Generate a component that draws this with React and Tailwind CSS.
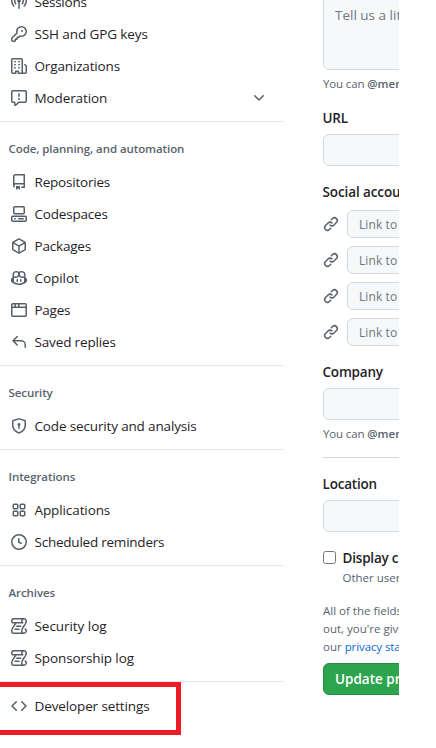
const ICONS = {
  broadcast: 'M8.75 8.582v5.668a.75.75 0 0 1-1.5 0V8.582a1.75 1.75 0 1 1 1.5 0Zm3.983-7.125a.75.75 0 0 1 1.06.026A7.976 7.976 0 0 1 16 7c0 2.139-.84 4.083-2.207 5.517a.75.75 0 1 1-1.086-1.034A6.474 6.474 0 0 0 14.5 7a6.474 6.474 0 0 0-1.793-4.483.75.75 0 0 1 .026-1.06Zm-9.466 0c.3.286.312.76.026 1.06A6.474 6.474 0 0 0 1.5 7a6.47 6.47 0 0 0 1.793 4.483.75.75 0 0 1-1.086 1.034A7.973 7.973 0 0 1 0 7c0-2.139.84-4.083 2.207-5.517a.75.75 0 0 1 1.06-.026Zm8.556 2.321A4.988 4.988 0 0 1 13 7a4.988 4.988 0 0 1-1.177 3.222.75.75 0 1 1-1.146-.967A3.487 3.487 0 0 0 11.5 7c0-.86-.309-1.645-.823-2.255a.75.75 0 0 1 1.146-.967Zm-6.492.958A3.48 3.48 0 0 0 4.5 7a3.48 3.48 0 0 0 .823 2.255.75.75 0 0 1-1.146.967A4.981 4.981 0 0 1 3 7a4.982 4.982 0 0 1 1.188-3.236.75.75 0 1 1 1.143.972Z',
  key: 'M10.5 0a5.499 5.499 0 1 1-1.288 10.848l-.932.932a.749.749 0 0 1-.53.22H7v.75a.749.749 0 0 1-.22.53l-.5.5a.749.749 0 0 1-.53.22H5v.75a.749.749 0 0 1-.22.53l-.5.5a.749.749 0 0 1-.53.22h-2A1.75 1.75 0 0 1 0 14.25v-2c0-.199.079-.389.22-.53l4.932-4.932A5.5 5.5 0 0 1 10.5 0Zm-4 5.5c-.001.431.069.86.205 1.269a.75.75 0 0 1-.181.768L1.5 12.56v1.69c0 .138.112.25.25.25h1.69l.06-.06v-1.19a.75.75 0 0 1 .75-.75h1.19l.06-.06v-1.19a.75.75 0 0 1 .75-.75h1.19l1.023-1.025a.75.75 0 0 1 .768-.18A4 4 0 1 0 6.5 5.5ZM11 6a1 1 0 1 1 0-2 1 1 0 0 1 0 2Z',
  organization: 'M1.75 16A1.75 1.75 0 0 1 0 14.25V1.75C0 .784.784 0 1.75 0h8.5C11.216 0 12 .784 12 1.75v12.5c0 .085-.006.168-.018.25h2.268a.25.25 0 0 0 .25-.25V8.285a.25.25 0 0 0-.111-.208l-1.055-.703a.749.749 0 1 1 .832-1.248l1.055.703c.487.325.779.871.779 1.456v5.965A1.75 1.75 0 0 1 14.25 16h-3.5a.766.766 0 0 1-.197-.026c-.099.017-.2.026-.303.026h-3a.75.75 0 0 1-.75-.75V14h-1v1.25a.75.75 0 0 1-.75.75Zm-.25-1.75c0 .138.112.25.25.25H4v-1.25a.75.75 0 0 1 .75-.75h2.5a.75.75 0 0 1 .75.75v1.25h2.25a.25.25 0 0 0 .25-.25V1.75a.25.25 0 0 0-.25-.25h-8.5a.25.25 0 0 0-.25.25ZM3.75 6h.5a.75.75 0 0 1 0 1.5h-.5a.75.75 0 0 1 0-1.5ZM3 3.75A.75.75 0 0 1 3.75 3h.5a.75.75 0 0 1 0 1.5h-.5A.75.75 0 0 1 3 3.75Zm4 3A.75.75 0 0 1 7.75 6h.5a.75.75 0 0 1 0 1.5h-.5A.75.75 0 0 1 7 6.75ZM7.75 3h.5a.75.75 0 0 1 0 1.5h-.5a.75.75 0 0 1 0-1.5ZM3 9.75A.75.75 0 0 1 3.75 9h.5a.75.75 0 0 1 0 1.5h-.5A.75.75 0 0 1 3 9.75ZM7.75 9h.5a.75.75 0 0 1 0 1.5h-.5a.75.75 0 0 1 0-1.5Z',
  report: 'M0 1.75C0 .784.784 0 1.75 0h12.5C15.216 0 16 .784 16 1.75v9.5A1.75 1.75 0 0 1 14.25 13H8.06l-2.573 2.573A1.458 1.458 0 0 1 3 14.543V13H1.75A1.75 1.75 0 0 1 0 11.25Zm1.75-.25a.25.25 0 0 0-.25.25v9.5c0 .138.112.25.25.25h2a.75.75 0 0 1 .75.75v2.19l2.72-2.72a.749.749 0 0 1 .53-.22h6.5a.25.25 0 0 0 .25-.25v-9.5a.25.25 0 0 0-.25-.25Zm7 2.25v2.5a.75.75 0 0 1-1.5 0v-2.5a.75.75 0 0 1 1.5 0ZM9 9a1 1 0 1 1-2 0 1 1 0 0 1 2 0Z',
  chevron: 'M12.78 5.22a.749.749 0 0 1 0 1.06l-4.25 4.25a.749.749 0 0 1-1.06 0L3.22 6.28a.749.749 0 1 1 1.06-1.06L8 8.939l3.72-3.719a.749.749 0 0 1 1.06 0Z',
  repo: 'M2 2.5A2.5 2.5 0 0 1 4.5 0h8.75a.75.75 0 0 1 .75.75v12.5a.75.75 0 0 1-.75.75h-2.5a.75.75 0 0 1 0-1.5h1.75v-2h-8a1 1 0 0 0-.714 1.7.75.75 0 1 1-1.072 1.05A2.495 2.495 0 0 1 2 11.5Zm10.5-1h-8a1 1 0 0 0-1 1v6.708A2.486 2.486 0 0 1 4.5 9h8ZM5 12.25a.25.25 0 0 1 .25-.25h3.5a.25.25 0 0 1 .25.25v3.25a.25.25 0 0 1-.4.2l-1.45-1.087a.249.249 0 0 0-.3 0L5.4 15.7a.25.25 0 0 1-.4-.2Z',
  codespaces: 'M0 11.25c0-.966.784-1.75 1.75-1.75h12.5c.966 0 1.75.784 1.75 1.75v3A1.75 1.75 0 0 1 14.25 16H1.75A1.75 1.75 0 0 1 0 14.25Zm2-9.5C2 .784 2.784 0 3.75 0h8.5C13.216 0 14 .784 14 1.75v5a1.75 1.75 0 0 1-1.75 1.75h-8.5A1.75 1.75 0 0 1 2 6.75Zm1.75-.25a.25.25 0 0 0-.25.25v5c0 .138.112.25.25.25h8.5a.25.25 0 0 0 .25-.25v-5a.25.25 0 0 0-.25-.25Zm-2 9.5a.25.25 0 0 0-.25.25v3c0 .138.112.25.25.25h12.5a.25.25 0 0 0 .25-.25v-3a.25.25 0 0 0-.25-.25ZM7 12.75a.75.75 0 0 1 .75-.75h4.5a.75.75 0 0 1 0 1.5h-4.5a.75.75 0 0 1-.75-.75Zm-4 0a.75.75 0 0 1 .75-.75h.5a.75.75 0 0 1 0 1.5h-.5a.75.75 0 0 1-.75-.75Z',
  package: 'm8.878.392 5.25 3.045c.54.314.872.89.872 1.514v6.098a1.75 1.75 0 0 1-.872 1.514l-5.25 3.045a1.75 1.75 0 0 1-1.756 0l-5.25-3.045A1.75 1.75 0 0 1 1 11.049V4.951c0-.624.332-1.201.872-1.514L7.122.392a1.75 1.75 0 0 1 1.756 0ZM7.875 1.69l-4.63 2.685L8 7.133l4.755-2.758-4.63-2.685a.248.248 0 0 0-.25 0ZM2.5 5.677v5.372c0 .09.047.171.125.216l4.625 2.683V8.432Zm6.25 8.271 4.625-2.683a.25.25 0 0 0 .125-.216V5.677L8.75 8.432Z',
  copilot: 'M7.998 15.035c-4.562 0-7.873-2.914-7.998-3.749V9.338c.085-.628.677-1.686 1.588-2.065.013-.07.024-.143.036-.218.029-.183.06-.384.126-.612-.201-.508-.254-1.084-.254-1.656 0-.87.128-1.769.693-2.484.579-.733 1.494-1.124 2.724-1.261 1.206-.134 2.262.034 2.944.765.05.053.096.108.139.165.044-.057.094-.112.143-.165.682-.731 1.738-.899 2.944-.765 1.23.137 2.145.528 2.724 1.261.566.715.693 1.614.693 2.484 0 .572-.053 1.148-.254 1.656.066.228.098.429.126.612.012.076.024.148.037.218.924.385 1.522 1.471 1.591 2.095v1.872c0 .766-3.351 3.795-8.002 3.795Zm0-1.485c2.28 0 4.584-1.11 5.002-1.433V7.862l-.023-.116c-.49.21-1.075.291-1.727.291-1.146 0-2.059-.327-2.71-.991A3.222 3.222 0 0 1 8 6.303a3.24 3.24 0 0 1-.544.743c-.65.664-1.563.991-2.71.991-.652 0-1.236-.081-1.727-.291l-.023.116v4.255c.419.323 2.722 1.433 5.002 1.433ZM6.762 2.83c-.193-.206-.637-.413-1.682-.297-1.019.113-1.479.404-1.713.7-.247.312-.369.789-.369 1.554 0 .793.129 1.171.308 1.371.162.181.519.379 1.442.379.853 0 1.339-.235 1.638-.54.315-.322.527-.827.617-1.553.117-.935-.037-1.395-.241-1.614Zm4.155-.297c-1.044-.116-1.488.091-1.681.297-.204.219-.359.679-.242 1.614.091.726.303 1.231.618 1.553.299.305.784.54 1.638.54.922 0 1.28-.198 1.442-.379.179-.2.308-.578.308-1.371 0-.765-.123-1.242-.37-1.554-.233-.296-.693-.587-1.713-.7ZM6.25 9.037a.75.75 0 0 1 .75.75v1.501a.75.75 0 0 1-1.5 0V9.787a.75.75 0 0 1 .75-.75Zm4.25.75v1.501a.75.75 0 0 1-1.5 0V9.787a.75.75 0 0 1 1.5 0Z',
  browser: 'M0 2.75C0 1.784.784 1 1.75 1h12.5c.966 0 1.75.784 1.75 1.75v10.5A1.75 1.75 0 0 1 14.25 15H1.75A1.75 1.75 0 0 1 0 13.25ZM14.5 6h-13v7.25c0 .138.112.25.25.25h12.5a.25.25 0 0 0 .25-.25Zm-6-3.5v2h6V2.75a.25.25 0 0 0-.25-.25ZM5 2.5v2h2v-2Zm-3.25 0a.25.25 0 0 0-.25.25V4.5h2v-2Z',
  reply: 'M6.78 1.97a.75.75 0 0 1 0 1.06L3.81 6h6.44A4.75 4.75 0 0 1 15 10.75v2.5a.75.75 0 0 1-1.5 0v-2.5a3.25 3.25 0 0 0-3.25-3.25H3.81l2.97 2.97a.749.749 0 0 1-.326 1.275.749.749 0 0 1-.734-.215L1.47 7.28a.75.75 0 0 1 0-1.06l4.25-4.25a.75.75 0 0 1 1.06 0Z',
  shield: 'm8.533.133 5.25 1.68A1.75 1.75 0 0 1 15 3.48V7c0 1.566-.32 3.182-1.303 4.682-.983 1.498-2.585 2.813-5.032 3.855a1.697 1.697 0 0 1-1.33 0c-2.447-1.042-4.049-2.357-5.032-3.855C1.32 10.182 1 8.566 1 7V3.48a1.75 1.75 0 0 1 1.217-1.667l5.25-1.68a1.748 1.748 0 0 1 1.066 0Zm-.61 1.429.001.001-5.25 1.68a.251.251 0 0 0-.174.237V7c0 1.36.275 2.666 1.057 3.859.784 1.194 2.121 2.342 4.366 3.298a.196.196 0 0 0 .154 0c2.245-.957 3.582-2.103 4.366-3.297C13.225 9.666 13.5 8.358 13.5 7V3.48a.25.25 0 0 0-.174-.238l-5.25-1.68a.25.25 0 0 0-.153 0ZM9.5 6.5c0 .536-.286 1.032-.75 1.3v2.45a.75.75 0 0 1-1.5 0V7.8A1.5 1.5 0 1 1 9.5 6.5Z',
  apps: 'M1.5 3.25c0-.966.784-1.75 1.75-1.75h2.5c.966 0 1.75.784 1.75 1.75v2.5A1.75 1.75 0 0 1 5.75 7.5h-2.5A1.75 1.75 0 0 1 1.5 5.75Zm7 0c0-.966.784-1.75 1.75-1.75h2.5c.966 0 1.75.784 1.75 1.75v2.5a1.75 1.75 0 0 1-1.75 1.75h-2.5A1.75 1.75 0 0 1 8.5 5.75Zm-7 7c0-.966.784-1.75 1.75-1.75h2.5c.966 0 1.75.784 1.75 1.75v2.5a1.75 1.75 0 0 1-1.75 1.75h-2.5a1.75 1.75 0 0 1-1.75-1.75Zm7 0c0-.966.784-1.75 1.75-1.75h2.5c.966 0 1.75.784 1.75 1.75v2.5a1.75 1.75 0 0 1-1.75 1.75h-2.5a1.75 1.75 0 0 1-1.75-1.75ZM3.25 3a.25.25 0 0 0-.25.25v2.5c0 .138.112.25.25.25h2.5A.25.25 0 0 0 6 5.75v-2.5A.25.25 0 0 0 5.75 3Zm7 0a.25.25 0 0 0-.25.25v2.5c0 .138.112.25.25.25h2.5a.25.25 0 0 0 .25-.25v-2.5a.25.25 0 0 0-.25-.25Zm-7 7a.25.25 0 0 0-.25.25v2.5c0 .138.112.25.25.25h2.5a.25.25 0 0 0 .25-.25v-2.5a.25.25 0 0 0-.25-.25Zm7 0a.25.25 0 0 0-.25.25v2.5c0 .138.112.25.25.25h2.5a.25.25 0 0 0 .25-.25v-2.5a.25.25 0 0 0-.25-.25Z',
  clock: 'M8 0a8 8 0 1 1 0 16A8 8 0 0 1 8 0ZM1.5 8a6.5 6.5 0 1 0 13 0 6.5 6.5 0 0 0-13 0Zm7-3.25v2.992l2.028.812a.75.75 0 0 1-.557 1.392l-2.5-1A.751.751 0 0 1 7 8.25v-3.5a.75.75 0 0 1 1.5 0Z',
  log: 'M5 8.25a.75.75 0 0 1 .75-.75h4a.75.75 0 0 1 0 1.5h-4A.75.75 0 0 1 5 8.25ZM4 10.5A.75.75 0 0 0 4 12h4a.75.75 0 0 0 0-1.5H4ZM13-.005c1.654 0 3 1.328 3 3 0 .982-.338 1.933-.783 2.818-.443.879-1.028 1.758-1.582 2.588l-.011.017c-.568.853-1.104 1.659-1.501 2.446-.398.789-.623 1.494-.623 2.136a1.5 1.5 0 1 0 2.333-1.248.75.75 0 0 1 .834-1.246A3 3 0 0 1 13 16H3a3 3 0 0 1-3-3c0-1.582.891-3.135 1.777-4.506.209-.322.418-.637.623-.946.473-.709.923-1.386 1.287-2.048H2.51c-.576 0-1.381-.133-1.907-.783A2.68 2.68 0 0 1 0 2.995a3 3 0 0 1 3-3Zm0 1.5a1.5 1.5 0 0 0-1.5 1.5c0 .476.223.834.667 1.132A.75.75 0 0 1 11.75 5.5H5.368c-.467 1.003-1.141 2.015-1.773 2.963-.192.289-.381.571-.558.845C2.13 10.711 1.5 11.916 1.5 13A1.5 1.5 0 0 0 3 14.5h7.401A2.989 2.989 0 0 1 10 13c0-.979.338-1.928.784-2.812.441-.874 1.023-1.748 1.575-2.576l.017-.026c.568-.853 1.103-1.658 1.501-2.448.398-.79.623-1.497.623-2.143 0-.838-.669-1.5-1.5-1.5Zm-10 0a1.5 1.5 0 0 0-1.5 1.5c0 .321.1.569.27.778.097.12.325.227.74.227h7.674A2.737 2.737 0 0 1 10 2.995c0-.546.146-1.059.401-1.5Z',
  code: 'm11.28 3.22 4.25 4.25a.75.75 0 0 1 0 1.06l-4.25 4.25a.749.749 0 0 1-1.275-.326.749.749 0 0 1 .215-.734L13.94 8l-3.72-3.72a.749.749 0 0 1 .326-1.275.749.749 0 0 1 .734.215Zm-6.56 0a.751.751 0 0 1 1.042.018.751.751 0 0 1 .018 1.042L2.06 8l3.72 3.72a.749.749 0 0 1-.326 1.275.749.749 0 0 1-.734-.215L.47 8.53a.75.75 0 0 1 0-1.06Z',
  link: 'm7.775 3.275 1.25-1.25a3.5 3.5 0 1 1 4.95 4.95l-2.5 2.5a3.5 3.5 0 0 1-4.95 0 .751.751 0 0 1 .018-1.042.751.751 0 0 1 1.042-.018 1.998 1.998 0 0 0 2.83 0l2.5-2.5a2.002 2.002 0 0 0-2.83-2.83l-1.25 1.25a.751.751 0 0 1-1.042-.018.751.751 0 0 1-.018-1.042Zm-4.69 9.64a1.998 1.998 0 0 0 2.83 0l1.25-1.25a.751.751 0 0 1 1.042.018.751.751 0 0 1 .018 1.042l-1.25 1.25a3.5 3.5 0 1 1-4.95-4.95l2.5-2.5a3.5 3.5 0 0 1 4.95 0 .751.751 0 0 1-.018 1.042.751.751 0 0 1-1.042.018 1.998 1.998 0 0 0-2.83 0l-2.5 2.5a1.998 1.998 0 0 0 0 2.83Z',
};

function Icon({ name }) {
  return (
    <svg viewBox="0 0 16 16" className="size-4 shrink-0 fill-[#57606a]">
      <path d={ICONS[name]} />
    </svg>
  );
}

const GROUPS = [
  {
    items: [
      ['broadcast', 'Sessions', 'tracking-[-0.25px]'],
      ['key', 'SSH and GPG keys', 'tracking-[-0.1px]'],
      ['organization', 'Organizations', 'tracking-[-0.15px]'],
      ['report', 'Moderation', 'tracking-[-0.1px]', true],
    ],
  },
  {
    title: 'Code, planning, and automation',
    items: [
      ['repo', 'Repositories', 'tracking-[-0.2px]'],
      ['codespaces', 'Codespaces', 'tracking-[-0.2px]'],
      ['package', 'Packages', 'tracking-[-0.2px]'],
      ['copilot', 'Copilot', 'tracking-[-0.05px]'],
      ['browser', 'Pages', 'tracking-[-0.25px]'],
      ['reply', 'Saved replies', 'tracking-[-0.15px]'],
    ],
  },
  {
    title: 'Security',
    items: [['shield', 'Code security and analysis', 'tracking-[-0.15px]']],
  },
  {
    title: 'Integrations',
    items: [
      ['apps', 'Applications', 'tracking-[-0.1px]'],
      ['clock', 'Scheduled reminders', 'tracking-[-0.23px]'],
    ],
  },
  {
    title: 'Archives',
    items: [
      ['log', 'Security log', 'tracking-[-0.05px]'],
      ['log', 'Sponsorship log', 'tracking-[-0.1px]'],
    ],
  },
];

function NavItem({ icon, label, tracking, expandable }) {
  return (
    <li className="flex h-8 items-center pr-4 pl-[11px]">
      <Icon name={icon} />
      <span className={`ml-[7.5px] grow text-[13.5px] leading-5 text-[#1f2328] ${tracking}`}>{label}</span>
      {expandable && <Icon name="chevron" />}
    </li>
  );
}

function Sidebar() {
  return (
    <nav className="-mt-3.5 w-[283px] shrink-0">
      {GROUPS.map((group, i) => (
        <section key={i} className="border-b border-[#e6e8eb] pb-[7px]">
          {group.title && (
            <h3 className="flex h-11 items-center pt-2.5 pl-[8.5px] text-[11.5px] font-semibold tracking-[-0.08px] text-[#59636e]">
              {group.title}
            </h3>
          )}
          <ul>
            {group.items.map(([icon, label, tracking, expandable]) => (
              <NavItem key={label} icon={icon} label={label} tracking={tracking} expandable={expandable} />
            ))}
          </ul>
        </section>
      ))}
      <div className="h-[53px] w-[181px] border-y-5 border-r-5 border-[#ee1c24] pt-[3px]">
        <ul>
          <NavItem icon="code" label="Developer settings" tracking="tracking-[-0.12px]" />
        </ul>
      </div>
    </nav>
  );
}

function Label({ children, tracking = 'tracking-[-0.2px]' }) {
  return (
    <div className={`-ml-[0.5px] h-5 text-[13.5px] leading-5 font-semibold text-[#1f2328] ${tracking}`}>
      {children}
    </div>
  );
}

function Field() {
  return <div className="mt-1.5 h-8 w-40 rounded-md border border-[#d1d9e0] bg-[#f6f8fa]" />;
}

function MentionNote() {
  return (
    <p className="mt-[5px] h-[18px] text-[11.5px] leading-[18px] text-[#59636e]">
      <span className="tracking-[-0.13px]">You can </span>
      <b className="font-semibold">@mention</b>
    </p>
  );
}

function ProfileForm() {
  return (
    <main className="ml-10 h-[748px] w-[76px] overflow-hidden whitespace-nowrap">
      <div className="-mt-2 h-[78px] w-40 rounded-md border border-[#d1d9e0] bg-[#f6f8fa] pt-3 pl-[11px] text-[13.5px] leading-5 text-[#6e7781]">
        Tell us a little bit
      </div>
      <MentionNote />
      <div className="mt-[15px]">
        <Label>URL</Label>
        <Field />
      </div>
      <div className="mt-4">
        <Label tracking="tracking-[-0.1px]">Social accounts</Label>
        <div className="mt-2 flex flex-col gap-2">
          {[1, 2, 3, 4].map((n) => (
            <div key={n} className="flex h-7 items-center gap-2">
              <Icon name="link" />
              <div className="h-7 w-40 shrink-0 rounded-md border border-[#d1d9e0] bg-[#f6f8fa] pl-[11px] text-[12px] leading-[27px] tracking-[0.1px] text-[#6e7781]">
                Link to social profile
              </div>
            </div>
          ))}
        </div>
      </div>
      <div className="mt-4">
        <Label>Company</Label>
        <Field />
      </div>
      <MentionNote />
      <hr className="mt-3.5 w-40 border-[#d1d9e0]" />
      <div className="mt-4">
        <Label>Location</Label>
        <Field />
      </div>
      <div className="mt-4 flex">
        <span className="mt-[3px] size-[13px] shrink-0 rounded-[2.5px] border border-[#767676] bg-white" />
        <div className="ml-[7px]">
          <Label>Display current local time</Label>
          <p className="-ml-[0.5px] h-[18px] text-[11.5px] leading-[20px] text-[#59636e]">Other users will see</p>
        </div>
      </div>
      <p className="mt-4 text-[11.5px] leading-[18px] text-[#59636e]">
        All of the fields on
        <br />
        out, you&apos;re giving
        <br />
        our <span className="tracking-[-0.1px] text-[#0969da]">privacy statement</span>
      </p>
      <button className="mt-[7px] block h-8 w-40 rounded-md border border-[#268a41] bg-[#2da44e] pl-[11px] text-left text-[13.5px] leading-5 font-semibold text-white">
        Update profile
      </button>
    </main>
  );
}

export default function App() {
  return (
    <div className="flex h-[748px] w-[436px] overflow-hidden bg-white font-['Open_Sans','Noto_Sans',sans-serif]">
      <Sidebar />
      <ProfileForm />
    </div>
  );
}
